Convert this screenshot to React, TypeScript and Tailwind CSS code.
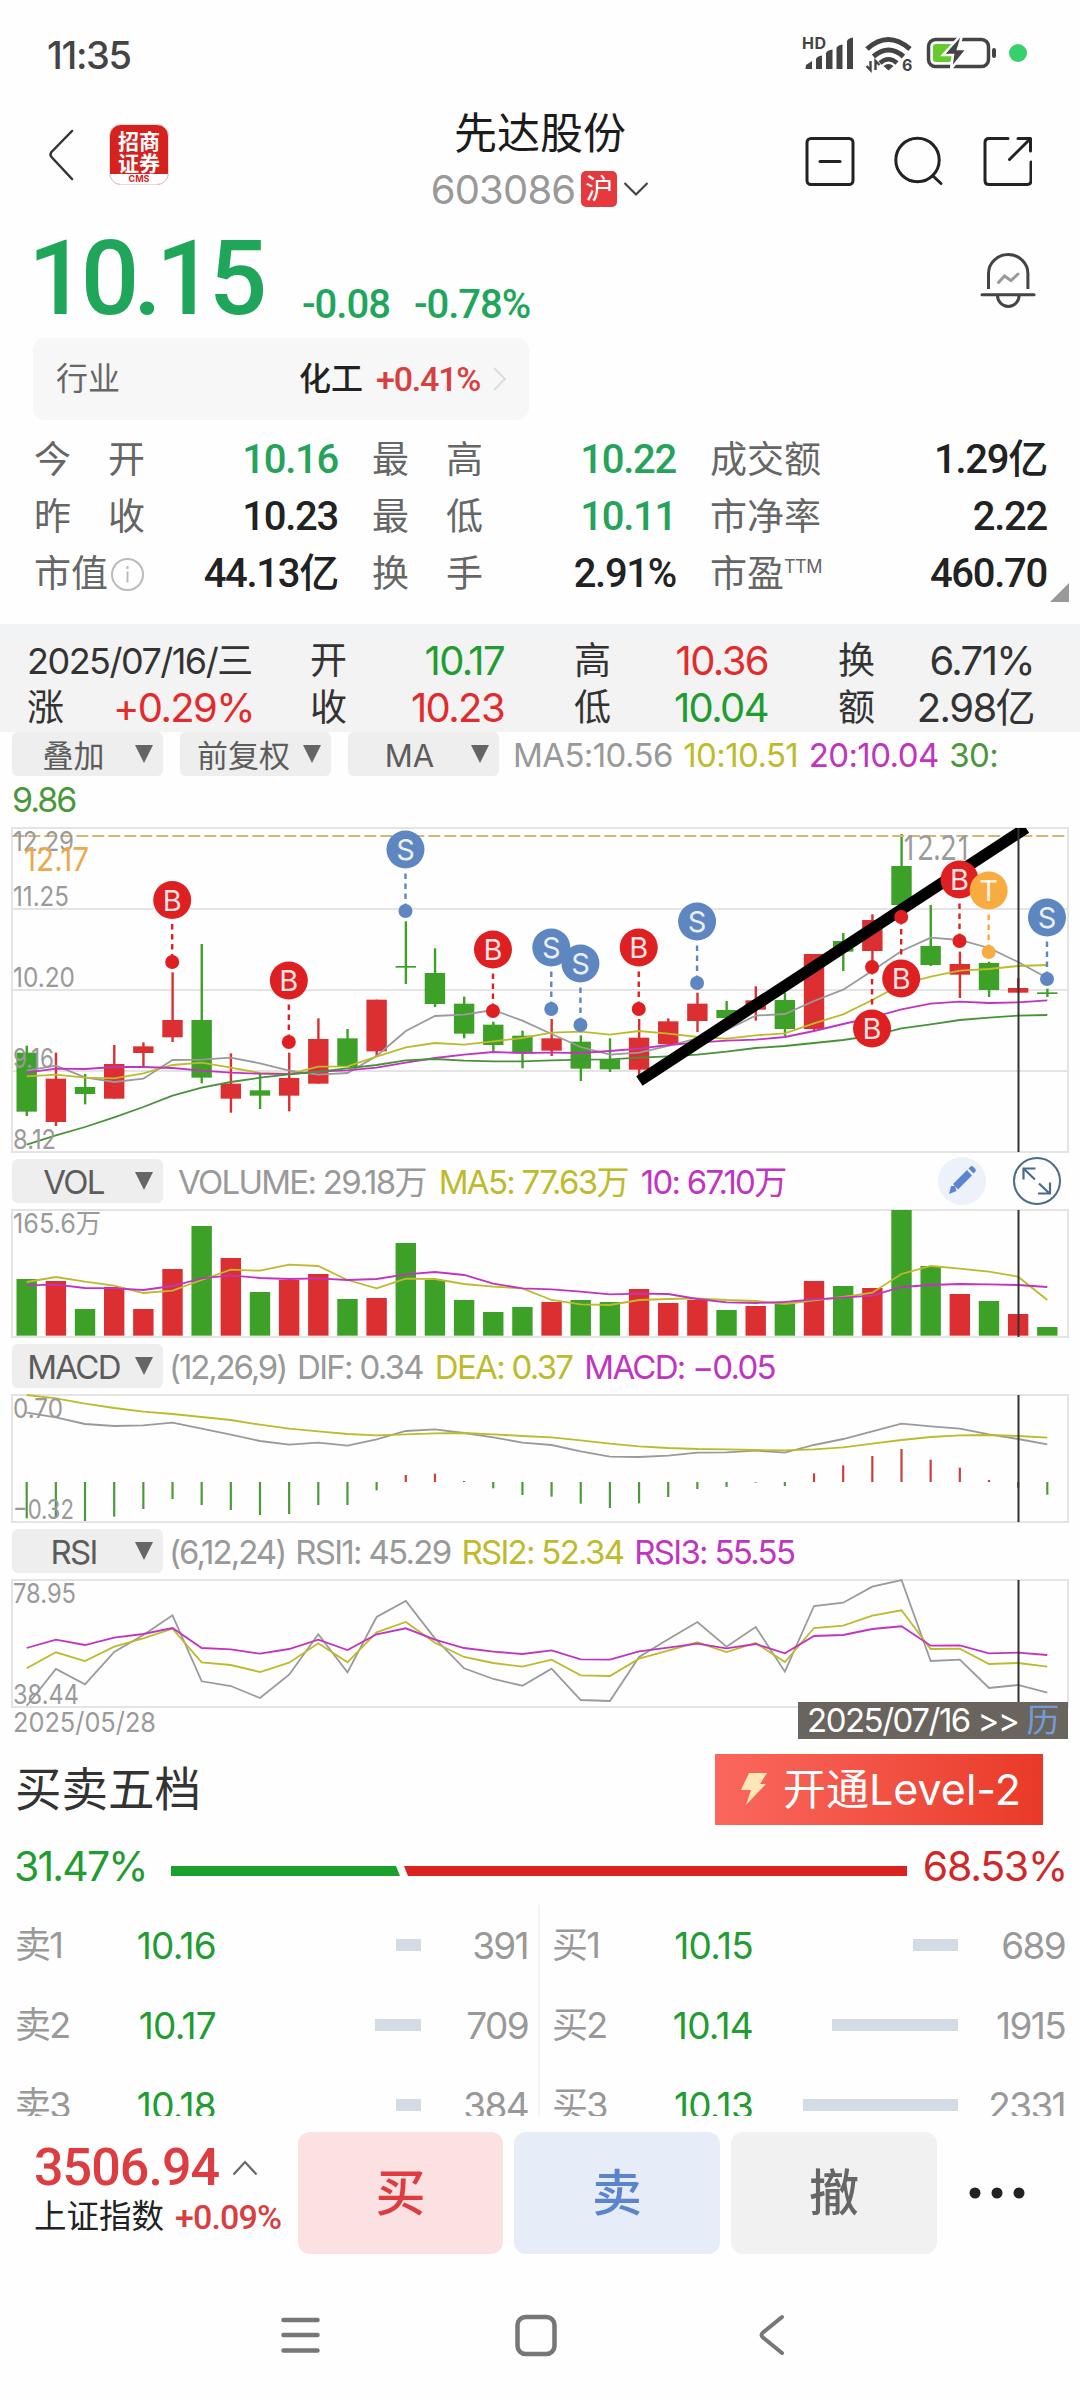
import type { ReactNode } from 'react'

/* ── Shared chart geometry: every pane draws 36 sessions on the same x grid ── */
const LEFT = 12
const RIGHT = 1068
const CURSOR_X = 1018.5
const RED = '#dc2f31'
const GREEN = '#3ea127'
const GRAY = '#9a9a9a'
const YELLOW = '#bdbb2b'
const MAGENTA = '#c035c0'

const cx = (i: number) => 26.7 + 29.16 * i

const toPoints = (values: number[], top: number) =>
  values.map((v, i) => `${cx(i).toFixed(1)},${(top + v / 3).toFixed(1)}`).join(' ')

/* high, body top, body bottom, low (thirds of a pixel from y=800) */
const candles: [string, number, number, number, number][] = [
  ['g', 737, 758, 935, 948], ['r', 758, 836, 966, 978], ['g', 822, 861, 882, 913],
  ['r', 735, 792, 896, 896], ['r', 727, 739, 759, 800], ['r', 517, 660, 712, 726],
  ['g', 432, 660, 833, 850], ['r', 760, 851, 896, 938], ['g', 822, 871, 887, 927],
  ['r', 758, 834, 887, 934], ['r', 655, 717, 851, 851], ['g', 687, 715, 801, 801],
  ['r', 599, 599, 754, 768], ['g', 364, 498, 503, 552], ['g', 445, 519, 612, 621],
  ['g', 590, 611, 701, 715], ['g', 665, 674, 735, 753], ['g', 692, 707, 757, 805],
  ['r', 657, 715, 752, 768], ['g', 706, 725, 806, 843], ['g', 715, 778, 808, 816],
  ['r', 657, 713, 809, 830], ['r', 655, 664, 732, 732], ['r', 578, 611, 663, 696],
  ['g', 603, 630, 654, 654], ['r', 559, 601, 629, 662], ['g', 578, 600, 687, 709],
  ['r', 462, 462, 687, 693], ['g', 399, 423, 455, 513], ['r', 343, 360, 453, 500],
  ['g', 102, 198, 315, 315], ['g', 315, 438, 495, 498], ['r', 455, 492, 524, 594],
  ['g', 485, 489, 570, 591], ['r', 534, 564, 578, 578], ['g', 566, 577, 582, 591],
]

const ma5 = [812, 797, 832, 846, 836, 780, 779, 773, 790, 812, 824, 819, 768, 693, 648, 644, 630, 662, 702, 741, 764, 758, 738, 715, 690, 647, 642, 603, 569, 512, 453, 413, 420, 444, 486, 534]
const ma10 = [829, 824, 833, 835, 820, 795, 788, 803, 819, 822, 800, 799, 770, 742, 729, 734, 724, 714, 698, 695, 704, 693, 701, 711, 716, 706, 700, 670, 643, 600, 553, 530, 512, 507, 498, 495]
const ma20 = [818, 806, 807, 801, 801, 804, 812, 818, 821, 822, 815, 811, 803, 788, 774, 764, 756, 759, 758, 759, 753, 746, 735, 728, 722, 719, 711, 693, 672, 652, 628, 611, 605, 609, 607, 601]
const ma30 = [1034, 1006, 981, 952, 921, 887, 863, 846, 833, 823, 815, 805, 795, 781, 777, 782, 784, 784, 781, 779, 778, 773, 769, 764, 755, 744, 738, 729, 720, 707, 685, 673, 660, 653, 647, 645]

const volBars = [387, 393, 477, 411, 477, 357, 228, 324, 426, 390, 372, 447, 444, 279, 390, 450, 486, 471, 456, 450, 456, 417, 459, 450, 480, 468, 462, 393, 408, 414, 180, 348, 432, 453, 492, 531]
const volMa5 = [396, 381, 395, 407, 429, 422, 390, 359, 362, 344, 348, 390, 415, 386, 387, 402, 410, 415, 450, 463, 465, 450, 447, 445, 450, 453, 462, 451, 441, 428, 372, 348, 356, 365, 380, 450]
const volMa10 = [406, 404, 414, 415, 420, 408, 385, 376, 384, 387, 385, 390, 387, 373, 366, 375, 401, 415, 418, 425, 433, 431, 432, 447, 457, 459, 456, 448, 443, 437, 411, 405, 402, 403, 405, 411]

const dif = [788, 802, 822, 828, 826, 818, 836, 854, 873, 884, 878, 887, 868, 843, 838, 849, 862, 878, 885, 904, 920, 921, 917, 908, 907, 902, 908, 885, 867, 844, 821, 829, 836, 853, 867, 883]
const dea = [735, 745, 761, 774, 785, 792, 801, 810, 824, 836, 844, 852, 856, 853, 850, 849, 853, 858, 862, 871, 881, 889, 894, 897, 898, 900, 901, 898, 892, 881, 870, 861, 856, 855, 858, 863]
const macdBars = [1105, 1102, 1113, 1100, 1077, 1047, 1065, 1080, 1095, 1092, 1065, 1065, 1021, 975, 971, 993, 1015, 1035, 1040, 1061, 1074, 1060, 1041, 1017, 1011, 998, 1008, 970, 946, 918, 897, 929, 953, 990, 1014, 1034]

const rsi1 = [557, 447, 493, 396, 345, 286, 484, 498, 534, 464, 343, 457, 291, 243, 355, 445, 477, 497, 446, 540, 543, 411, 358, 306, 380, 321, 455, 258, 248, 200, 180, 423, 419, 504, 495, 518]
const rsi2 = [445, 397, 423, 380, 355, 326, 427, 435, 456, 428, 370, 427, 337, 306, 368, 411, 429, 440, 419, 466, 468, 416, 392, 367, 396, 369, 426, 324, 317, 287, 271, 387, 386, 432, 429, 440]
const rsi3 = [384, 359, 375, 353, 342, 324, 384, 388, 401, 387, 359, 390, 343, 325, 359, 384, 395, 402, 391, 418, 419, 394, 383, 371, 385, 372, 400, 348, 345, 327, 319, 377, 376, 400, 398, 405]

/* session index, badge letter, badge y, dot y */
const markers: [number, 'B' | 'S' | 'T', number, number][] = [
  [5, 'B', 900, 962], [9, 'B', 980.5, 1042], [13, 'S', 849.5, 911], [16, 'B', 949.5, 1011],
  [18, 'S', 947.5, 1009], [19, 'S', 963.5, 1025], [21, 'B', 947.5, 1009], [23, 'S', 921.5, 983],
  [29, 'B', 1028.5, 967], [30, 'B', 978.5, 917], [32, 'B', 879.5, 941], [33, 'T', 890.5, 952],
  [35, 'S', 917.5, 979],
]
const markerColor = { B: '#de2022', S: '#5e86c0', T: '#f8ab3f' }

function Line({ values, top, color }: { values: number[]; top: number; color: string }) {
  return <polyline points={toPoints(values, top)} fill="none" stroke={color} strokeWidth="1.8" />
}

function AxisText({ x = 13, y, w, size = 27.5, fill = GRAY, children }: { x?: number; y: number; w: number; size?: number; fill?: string; children: string }) {
  return (
    <text x={x} y={y} fontSize={size} fill={fill} textLength={w} lengthAdjust="spacingAndGlyphs">
      {children}
    </text>
  )
}

function Frame({ top, bottom }: { top: number; bottom: number }) {
  return <rect x={LEFT} y={top} width={RIGHT - LEFT} height={bottom - top} fill="none" stroke="#e4e4e4" strokeWidth="2" />
}

function Cursor({ top, bottom }: { top: number; bottom: number }) {
  return <line x1={CURSOR_X} x2={CURSOR_X} y1={top} y2={bottom} stroke="#333" strokeWidth="2" />
}

function PriceChart() {
  return (
    <svg className="block h-[332px] w-[1080px]" viewBox="0 824 1080 332">
      <clipPath id="price">
        <rect x="12" y="828" width="1056" height="324" />
      </clipPath>
      <Frame top={828} bottom={1152} />
      {[909, 990, 1071].map((y) => (
        <line key={y} x1={LEFT} x2={RIGHT} y1={y} y2={y} stroke="#e4e4e4" strokeWidth="2" />
      ))}
      {candles.map(([c, high, top, bottom, low], i) => {
        const color = c === 'r' ? RED : GREEN
        return (
          <g key={i} fill={color}>
            <rect x={cx(i) - 1.1} y={800 + high / 3} width="2.4" height={(low - high) / 3} />
            <rect x={cx(i) - 10.2} y={800 + top / 3} width="20.4" height={(bottom - top) / 3} />
          </g>
        )
      })}
      <Line values={ma5} top={800} color={GRAY} />
      <Line values={ma10} top={800} color={YELLOW} />
      <Line values={ma20} top={800} color={MAGENTA} />
      <Line values={ma30} top={800} color="#48923a" />
      <line x1="12.3" x2="1066" y1="836" y2="836" stroke="#d5b674" strokeWidth="2" strokeDasharray="12 4" />
      <AxisText y={851} w={61}>12.29</AxisText>
      <AxisText x={24} y={871} w={65} size={33} fill="#eba94b">12.17</AxisText>
      <AxisText y={906} w={56}>11.25</AxisText>
      <AxisText y={987} w={62}>10.20</AxisText>
      <AxisText y={1068} w={41}>9.16</AxisText>
      <AxisText y={1149} w={43}>8.12</AxisText>
      <text x="902" y="860" fontSize="34" fill={GRAY} fontFamily="Noto Sans" textLength="70" lengthAdjust="spacingAndGlyphs">12.21</text>
      <g clipPath="url(#price)">
        <line x1="639.4" y1="1081" x2="1026" y2="828" stroke="#000" strokeWidth="11.5" />
      </g>
      {markers.map(([i, letter, y, dot]) => {
        const color = markerColor[letter]
        const x = cx(i) - 0.3
        return (
          <g key={i}>
            <line x1={x} x2={x} y1={y + (dot > y ? 24 : -24)} y2={dot} stroke={color} strokeWidth="2.4" strokeDasharray="5.5 4.5" />
            <circle cx={x} cy={dot} r="7" fill={color} />
            <circle cx={x} cy={y} r="19" fill={color} />
            <text x={x} y={y + 10.5} fontSize="29" fill="#fff" fillOpacity="0.88" textAnchor="middle">{letter}</text>
          </g>
        )
      })}
      <Cursor top={828} bottom={1152} />
    </svg>
  )
}

function VolumeChart() {
  return (
    <svg className="block h-[135px] w-[1080px]" viewBox="0 1206 1080 135">
      <Frame top={1210} bottom={1337} />
      {volBars.map((v, i) => (
        <rect key={i} x={cx(i) - 10.2} y={1150 + v / 3} width="20.4" height={(557 - v) / 3} fill={candles[i][0] === 'r' ? RED : GREEN} />
      ))}
      <Line values={volMa5} top={1150} color={YELLOW} />
      <Line values={volMa10} top={1150} color={MAGENTA} />
      <AxisText y={1232.5} w={88}>165.6万</AxisText>
      <Cursor top={1210} bottom={1337} />
    </svg>
  )
}

function MacdChart() {
  return (
    <svg className="block h-[135px] w-[1080px]" viewBox="0 1391 1080 135">
      <Frame top={1395} bottom={1522} />
      {macdBars.map((v, i) => {
        const up = v < 996
        return (
          <rect
            key={i}
            x={cx(i) - 1.1}
            y={up ? 1150 + v / 3 : 1482}
            width="2.2"
            height={Math.abs(v - 996) / 3}
            fill={up ? '#c9403f' : '#4c9a3c'}
          />
        )
      })}
      <Line values={dif} top={1150} color={GRAY} />
      <Line values={dea} top={1150} color={YELLOW} />
      <AxisText y={1418} w={50}>0.70</AxisText>
      <AxisText y={1519} w={61}>−0.32</AxisText>
      <Cursor top={1395} bottom={1522} />
    </svg>
  )
}

function RsiChart() {
  return (
    <svg className="block h-[170px] w-[1080px]" viewBox="0 1576 1080 170">
      <Frame top={1580} bottom={1707} />
      <Line values={rsi1} top={1520} color={GRAY} />
      <Line values={rsi2} top={1520} color={YELLOW} />
      <Line values={rsi3} top={1520} color={MAGENTA} />
      <AxisText y={1603} w={63}>78.95</AxisText>
      <AxisText y={1704} w={66}>38.44</AxisText>
      <AxisText y={1732} w={143}>2025/05/28</AxisText>
      <Cursor top={1580} bottom={1707} />
    </svg>
  )
}

/* ── Grey selector in front of each indicator legend ── */
function Picker({ children }: { children: ReactNode }) {
  return (
    <div className="flex h-11 w-[151px] shrink-0 items-center justify-between rounded-md bg-[#eee] pr-[10px] text-[#5c5c5c]">
      <span className="flex-1 pt-[2px] text-center">{children}</span>
      <svg className="h-[18px] w-[18px]" viewBox="0 0 18 18">
        <path d="M0 0h18L9 18z" fill="#666" />
      </svg>
    </div>
  )
}

function Stat({ label, value, color = 'text-[#222]' }: { label: ReactNode; value: string; color?: string }) {
  return (
    <div className="flex h-[57px] items-center justify-between whitespace-nowrap">
      <span className="flex w-[111px] shrink-0 justify-between pt-px text-[37px] text-[#666]">{label}</span>
      <span className={`pt-[2px] font-['Roboto','Noto_Sans_CJK_SC',sans-serif] text-[40px] font-medium tracking-[-0.032em] ${color}`}>{value}</span>
    </div>
  )
}

const spread = (s: string) => s.split('').map((c) => <span key={c}>{c}</span>)

function StatusBar() {
  return (
    <div className="flex h-[108px] items-center justify-between pl-[47px] pr-[48px] text-[#444]">
      <span className="pt-px text-[38px] font-medium tracking-[-0.035em]">11:35</span>
      <svg className="h-[40px] w-[232px]" viewBox="800 35 232 40">
        <text x="802" y="50" fontSize="16" fontWeight="700" fill="#444" textLength="24">HD</text>
        <g fill="#444">
          <path d="M806 66l6-4v8h-6.500z" />
          <path d="M816 60q1-3 6-3.500v13.500h-6z" />
          <path d="M826 54q1-3 6.500-3.500v19.500h-6.500z" />
          <path d="M836.500 49q1-3 6-3.500v24.500h-6z" />
          <path d="M847 42q1-3 6-3.500v31.500h-6z" />
        </g>
        <g fill="none" stroke="#444" strokeWidth="5">
          <path d="M867 50q21-19 43 0" />
          <path d="M873.500 57.500q15-13 30 0" />
          <path d="M880 64q8.500-7.500 17 0" strokeWidth="4.500" />
        </g>
        <path d="M883.500 67q5-4 10 0l-5 4.500z" fill="#444" />
        <path d="M870.500 62v9l-4-4M875.500 71v-9l4 4" stroke="#444" strokeWidth="2.400" fill="none" />
        <text x="902" y="72" fontSize="16" fontWeight="700" fill="#444">6</text>
        <rect x="928.500" y="40.500" width="60" height="27" rx="7" fill="none" stroke="#444" strokeWidth="3.500" />
        <path d="M936 45h18l-10 11h10l-4 7h-14q-3 0-3-3V48q0-3 3-3z" fill="#65cb2c" />
        <path d="M960 37l-17 19h10l-2 14 16-20h-9l4-13z" fill="#444" stroke="#fefefe" strokeWidth="2.500" />
        <rect x="992" y="49" width="4" height="10" rx="2" fill="#444" />
        <circle cx="1018" cy="54" r="9" fill="#35d26b" />
      </svg>
    </div>
  )
}

function Header() {
  return (
    <div className="flex h-[112px] justify-between pl-[48px] pr-[48px]">
      <div className="flex w-[250px] gap-[35px] pt-[16px]">
        <svg className="mt-[5px] h-[52px] w-[26px]" viewBox="0 0 26 52" fill="none" stroke="#333" strokeWidth="2.5" strokeLinecap="round" strokeLinejoin="round">
          <path d="M24 2L3.500 23q-2 2.500 0 5L24 50" />
        </svg>
        <div className="flex h-[61px] w-[60px] flex-col overflow-hidden rounded-[12px] border border-[#e8dada] bg-[#d6221f] text-center font-bold text-white">
          <div className="flex flex-col gap-[2px] pt-[5px] font-['Noto_Sans_CJK_SC',sans-serif] text-[21px] leading-[20px]">
            <span>招商</span>
            <span>证券</span>
          </div>
          <div className="mt-auto h-[10px] bg-white text-[9px] leading-[10px] text-[#d6221f]">CMS</div>
        </div>
      </div>
      <div className="flex flex-col items-center">
        <div className="flex h-[51px] items-center text-[43px] text-[#1c1c1c]">先达股份</div>
        <div className="flex h-[63px] items-center">
          <span className="pt-[2px] text-[40px] tracking-[-0.02em] text-[#999]">603086</span>
          <span className="ml-[6px] flex h-9 w-9 items-center justify-center rounded-[5px] bg-[#e6393e] text-[28px] text-white">沪</span>
          <svg className="ml-[6px] h-4 w-[26px]" viewBox="0 0 26 16" fill="none" stroke="#444" strokeWidth="2.2">
            <path d="M1.500 2L13 13.500 24.500 2" />
          </svg>
        </div>
      </div>
      <svg className="mt-[28px] h-[50px] w-[250px]" viewBox="782 136 250 50" fill="none" stroke="#222" strokeWidth="3" strokeLinecap="round">
        <rect x="807" y="138.500" width="46" height="46" rx="4" />
        <path d="M820 161.500h20" />
        <circle cx="917.500" cy="160" r="21.700" />
        <path d="M933 176l8 7.500" />
        <path d="M1008 138.500h-19q-4 0-4 4v38q0 4 4 4h38q4 0 4-4V162" />
        <path d="M1018 138.500h12.500V151M1029 140l-19.500 19.500" strokeLinejoin="round" />
      </svg>
    </div>
  )
}

function PriceRow() {
  return (
    <div className="flex h-[118px] justify-between pl-[28px] pr-[44px] font-['Roboto',sans-serif] text-[#1fa65b]">
      <div className="flex">
        <span className="flex h-[117px] w-[274px] items-center text-[103px] font-medium tracking-[-0.057em]">10.15</span>
        <span className="flex h-[170px] items-center gap-[24px] text-[40px] font-medium tracking-[-0.025em]">
          <span>-0.08</span>
          <span>-0.78%</span>
        </span>
      </div>
      <svg className="mt-[32px] h-[58px] w-[56px]" viewBox="0 0 56 58" fill="none" stroke="#444" strokeWidth="3" strokeLinecap="round">
        <path d="M8.500 37V21.500a19.700 19 0 0 1 39.400 0V37" strokeLinecap="butt" />
        <path d="M2 42.800h52" />
        <path d="M17.500 43.500a10.800 11 0 0 0 21.600 0" />
        <path d="M18.500 30.500l6-6.500 6.500 4.500 7-6.500" stroke="#999" />
      </svg>
    </div>
  )
}

function Stats() {
  const green = 'text-[#26a35b]'
  return (
    <div className="flex h-[204px] items-start pl-[34px] pt-[10px]">
      <div className="w-[304px]">
        <Stat label={spread('今开')} value="10.16" color={green} />
        <Stat label={spread('昨收')} value="10.23" />
        <Stat
          label={
            <>
              市值
              <svg className="mt-[2px] h-[35px] w-[35px]" viewBox="0 0 35 35" fill="none" stroke="#bbb" strokeWidth="2">
                <circle cx="17.500" cy="17.500" r="15.500" />
                <path d="M17.500 14.500v11M17.500 9v3" />
              </svg>
            </>
          }
          value="44.13亿"
        />
      </div>
      <div className="ml-[34px] w-[304px]">
        <Stat label={spread('最高')} value="10.22" color={green} />
        <Stat label={spread('最低')} value="10.11" color={green} />
        <Stat label={spread('换手')} value="2.91%" />
      </div>
      <div className="ml-[34px] w-[337px]">
        <Stat label="成交额" value="1.29亿" />
        <Stat label="市净率" value="2.22" />
        <Stat
          label={
            <span className="flex items-start">
              市盈<span className="mt-[3px] text-[18px] tracking-[-0.03em]">TTM</span>
            </span>
          }
          value="460.70"
        />
      </div>
      <svg className="ml-[3px] mt-[153px] h-[20px] w-[20px]" viewBox="0 0 20 20">
        <path d="M19 0v19H0z" fill="#999" />
      </svg>
    </div>
  )
}

function DayCell({ label, value, color = 'text-[#333]' }: { label: string; value: string; color?: string }) {
  return (
    <div className="flex h-[47px] items-center justify-between">
      <span className="text-[37px]">{label}</span>
      <span className={`text-[40px] tracking-[-0.04em] ${color}`}>{value}</span>
    </div>
  )
}

function DayBand() {
  const red = 'text-[#e22b2c]'
  const green = 'text-[#219c31]'
  return (
    <div className="flex h-[108px] border-t-[13px] border-[#f2f3f5] bg-[#f3f3f3] pl-[27px] text-[#333]">
      <div className="w-[227px]">
        <div className="flex h-[47px] items-center whitespace-nowrap text-[36px] tracking-[-0.042em]">2025/07/16/三</div>
        <DayCell label="涨" value="+0.29%" color={red} />
      </div>
      <div className="ml-[56px] w-[194px]">
        <DayCell label="开" value="10.17" color={green} />
        <DayCell label="收" value="10.23" color={red} />
      </div>
      <div className="ml-[70px] w-[194px]">
        <DayCell label="高" value="10.36" color={red} />
        <DayCell label="低" value="10.04" color={green} />
      </div>
      <div className="ml-[70px] w-[196px]">
        <DayCell label="换" value="6.71%" />
        <DayCell label="额" value="2.98亿" />
      </div>
    </div>
  )
}

function Legend({ name, children }: { name: string; children: ReactNode }) {
  return (
    <div className="flex h-[50px] items-center whitespace-nowrap pl-3 text-[33px] tracking-[-0.052em]">
      <Picker>{name}</Picker>
      {children}
    </div>
  )
}

function OrderRow({ side, price, size, barWidth }: { side: string; price: string; size: string; barWidth: number }) {
  return (
    <div className="flex h-20 items-center text-[37px] text-[#999]">
      <span className="w-[90px] text-[36px] tracking-[-0.05em]">{side}</span>
      <span className="w-[111px] text-right tracking-[-0.02em] text-[#219c31]">{price}</span>
      <div className="flex w-[205px] justify-end">
        <div className="h-3 bg-[#d3dbe4]" style={{ width: barWidth }} />
      </div>
      <span className="w-[107px] text-right tracking-[-0.045em]">{size}</span>
    </div>
  )
}

function OrderBook() {
  return (
    <div className="flex h-[211px] overflow-hidden">
      <div className="w-[540px] border-r-2 border-[#f4f4f4] pl-[15px]">
        <OrderRow side="卖1" price="10.16" size="391" barWidth={25} />
        <OrderRow side="卖2" price="10.17" size="709" barWidth={46} />
        <OrderRow side="卖3" price="10.18" size="384" barWidth={25} />
      </div>
      <div className="w-[540px] pl-[12px]">
        <OrderRow side="买1" price="10.15" size="689" barWidth={45} />
        <OrderRow side="买2" price="10.14" size="1915" barWidth={126} />
        <OrderRow side="买3" price="10.13" size="2331" barWidth={155} />
      </div>
    </div>
  )
}

function BottomBar() {
  return (
    <div className="flex h-[154px] pl-[34px] pt-4">
      <div className="w-[264px] pt-2">
        <div className="flex h-[56px] items-center text-[#dd3c40]">
          <span className="w-[198px] font-['Roboto',sans-serif] text-[52px] font-medium tracking-[-0.018em]">3506.94</span>
          <svg className="h-4 w-[26px]" viewBox="0 0 26 16" fill="none" stroke="#666" strokeWidth="2.2">
            <path d="M1.500 14.500L13 2l11.500 12.500" />
          </svg>
        </div>
        <div className="flex h-[42px] items-center whitespace-nowrap text-[32.5px] text-[#222]">
          上证指数
          <span className="ml-[11px] font-['Roboto',sans-serif] text-[34px] font-medium tracking-[-0.025em] text-[#d8403f]">+0.09%</span>
        </div>
      </div>
      <div className="flex gap-[11px] text-[50px]">
        <div className="flex h-[122px] w-[205px] items-center justify-center rounded-xl bg-[#fce1e2] font-medium text-[#dd3c40]">买</div>
        <div className="flex h-[122px] w-[206px] items-center justify-center rounded-xl bg-[#e6edf8] font-medium text-[#5c84cc]">卖</div>
        <div className="flex h-[122px] w-[206px] items-center justify-center rounded-xl bg-[#f1f1f1] font-medium text-[#666]">撤</div>
      </div>
      <svg className="ml-[31px] mt-[55px] h-3 w-[58px]" viewBox="0 0 58 12" fill="#222">
        <circle cx="7" cy="6" r="5.500" />
        <circle cx="29" cy="6" r="5.500" />
        <circle cx="51" cy="6" r="5.500" />
      </svg>
    </div>
  )
}

export default function App() {
  return (
    <div className="flex h-[2400px] w-[1080px] flex-col overflow-hidden bg-[#fefefe] font-['Inter','Noto_Sans_CJK_SC',sans-serif] leading-none">
      <StatusBar />
      <Header />
      <PriceRow />

      {/* Industry chip */}
      <div className="ml-[33px] flex h-[82px] w-[496px] items-center rounded-xl bg-[#f7f7f7] pl-[23px]">
        <span className="w-[243px] text-[32px] text-[#666]">行业</span>
        <span className="text-[32px] font-medium text-[#222]">化工</span>
        <span className="ml-[13px] w-[116px] font-['Roboto',sans-serif] text-[34px] font-medium tracking-[-0.035em] text-[#d8403f]">+0.41%</span>
        <svg className="h-[26px] w-[16px]" viewBox="0 0 16 26" fill="none" stroke="#ddd" strokeWidth="2">
          <path d="M2 2l11 11L2 24" />
        </svg>
      </div>

      <Stats />
      <DayBand />

      {/* Price chart toolbar; the MA30 value wraps to its own line */}
      <div className="flex h-11 items-center gap-[17px] whitespace-nowrap pl-3 text-[31px]">
        <Picker>叠加</Picker>
        <Picker><span className="pl-1">前复权</span></Picker>
        <Picker>MA</Picker>
        <span className="-ml-[3px] flex gap-[10.5px] pt-[3px] text-[33px] tracking-[-0.018em]">
          <span className="text-[#999]">MA5:10.56</span>
          <span className="text-[#bdbb2b]">10:10.51</span>
          <span className="text-[#c035c0]">20:10.04</span>
          <span className="text-[#48983a]">30:</span>
        </span>
      </div>
      <div className="flex h-12 items-center pl-3 text-[34px] tracking-[-0.06em] text-[#48983a]">9.86</div>
      <PriceChart />

      <Legend name="VOL">
        <span className="ml-[15px] pt-[2px] text-[#999]">VOLUME: 29.18万</span>
        <span className="ml-[13px] pt-[2px] text-[#bdbb2b]">MA5: 77.63万</span>
        <span className="ml-[13px] pt-[2px] text-[#c035c0]">10: 67.10万</span>
        <svg className="ml-auto mr-[18px] h-[50px] w-[126px]" viewBox="936 1156 126 50">
          <circle cx="962" cy="1181" r="24" fill="#edf1fa" />
          <path d="M949 1194l2-8 4 0 1.500 5zM953 1184l14-14 5 5.500-14 14zM968.500 1168.500l2-2q1.500-1 3 .5l1.500 1.500q1.500 1.500.5 3l-2 2z" fill="#5d84d2" />
          <circle cx="1037" cy="1181" r="23" fill="none" stroke="#4a6b8a" strokeWidth="2" />
          <path d="M1035 1179.500l-11-10.500M1023.500 1179.500v-11h12M1039 1183.500l11 10.500M1050 1182.500v11h-12" fill="none" stroke="#4a6b8a" strokeWidth="2.200" />
        </svg>
      </Legend>
      <VolumeChart />

      <Legend name="MACD">
        <span className="ml-[6px] pt-[2px] tracking-[-0.065em] text-[#999]">(12,26,9)</span>
        <span className="ml-[11px] pt-[2px] text-[#999]">DIF: 0.34</span>
        <span className="ml-[12px] pt-[2px] text-[#bdbb2b]">DEA: 0.37</span>
        <span className="ml-[12px] pt-[2px] text-[#c035c0]">MACD: −0.05</span>
      </Legend>
      <MacdChart />

      <Legend name="RSI">
        <span className="ml-[6px] pt-[2px] tracking-[-0.06em] text-[#999]">(6,12,24)</span>
        <span className="ml-[10px] pt-[2px] text-[#999]">RSI1: 45.29</span>
        <span className="ml-[11px] pt-[2px] text-[#bdbb2b]">RSI2: 52.34</span>
        <span className="ml-[11px] pt-[2px] text-[#c035c0]">RSI3: 55.55</span>
      </Legend>
      <div className="relative">
        <RsiChart />
        {/* Selected date tag sits over the chart's bottom edge */}
        <div className="absolute right-3 top-[126px] flex h-[37px] w-[270px] items-center justify-between whitespace-nowrap bg-[#69655e] pl-[9px] pr-[10px] text-[33px] tracking-[-0.045em] text-white">
          <span>2025/07/16 &gt;&gt;</span>
          <span className="text-[#759bd6]">历</span>
        </div>
      </div>

      <div className="flex h-[86px] items-center justify-between pl-[15px] pr-[37px]">
        <span className="text-[46.5px] text-[#333]">买卖五档</span>
        <div className="flex h-[71px] w-[328px] items-center bg-linear-to-r from-[#fb675d] to-[#e93927] pl-[25px] text-white">
          <svg className="mr-[15px] h-[34px] w-[28px]" viewBox="0 0 28 34">
            <path d="M9 1h18l-7 11h6L6 33l5-15H1z" fill="#ffe6b8" />
          </svg>
          <span className="whitespace-nowrap text-[43px]">开通Level-2</span>
        </div>
      </div>

      {/* Bid / ask ratio */}
      <div className="flex h-[68px] items-center pl-[14px] pr-[13px] text-[41px] tracking-[-0.045em]">
        <span className="w-[157px] text-[#219c31]">31.47%</span>
        <svg className="mt-[10px] h-[10px] w-[736px]" viewBox="0 0 736 10">
          <path d="M0 0h225l4 10H0z" fill="#1ba02b" />
          <path d="M233 0h503v10H237z" fill="#dc2122" />
        </svg>
        <span className="ml-auto tracking-[-0.03em] text-[#cf2829]">68.53%</span>
      </div>
      <div className="h-[5px]" />
      <OrderBook />
      <BottomBar />

      <div className="flex h-[130px] justify-center">
        <svg className="h-[130px] w-[540px]" viewBox="270 2270 540 130" fill="none" stroke="#777" strokeWidth="4.500" strokeLinecap="round">
          <path d="M283.500 2320h34M283.500 2335h34M283.500 2350.500h34" />
          <rect x="517.500" y="2317" width="37" height="37" rx="8" />
          <path d="M782 2317l-19 15.500q-3 2.500 0 5L782 2353" strokeWidth="4" />
        </svg>
      </div>
    </div>
  )
}
